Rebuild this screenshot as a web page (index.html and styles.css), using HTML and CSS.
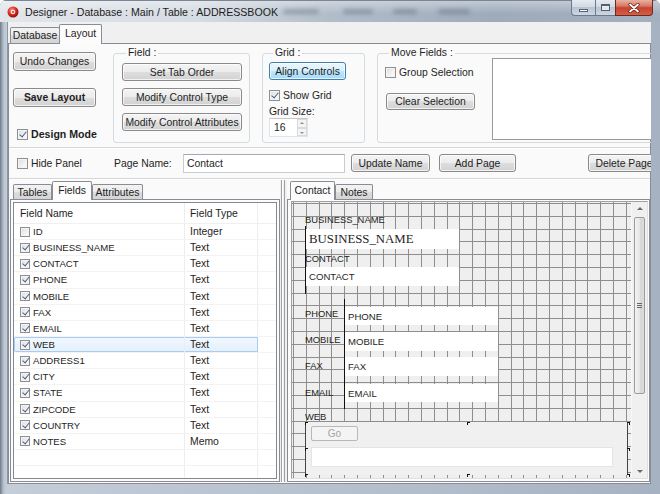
FILE: index.html
```html
<!DOCTYPE html>
<html>
<head>
<meta charset="utf-8">
<title>Designer</title>
<link rel="stylesheet" href="styles.css">
</head>
<body>
<div class="window">
  <div class="titlebar">
    <svg class="app-icon" width="12" height="12" viewBox="0 0 12 12">
      <defs>
        <radialGradient id="rg" cx="40%" cy="35%" r="65%">
          <stop offset="0" stop-color="#ff9a8a"/>
          <stop offset="0.6" stop-color="#d8261c"/>
          <stop offset="1" stop-color="#8e0f0a"/>
        </radialGradient>
      </defs>
      <circle cx="6" cy="6" r="5.5" fill="url(#rg)"/>
      <circle cx="6" cy="6" r="2.3" fill="#fff" opacity=".85"/>
      <circle cx="6" cy="6" r="1" fill="#d8261c"/>
    </svg>
    <span class="title">Designer - Database : Main / Table : ADDRESSBOOK</span>
    <div class="ghost"><i class="g1"></i><i class="g2"></i><i class="g3"></i><i class="g4"></i></div>
    <div class="caption">
      <span class="cap cap-min"><i></i></span>
      <span class="cap cap-max"><i></i></span>
      <span class="cap cap-close">
        <svg width="12" height="10" viewBox="0 0 12 10"><path d="M2 1.5 L10 8.5 M10 1.5 L2 8.5" stroke="#5a1a10" stroke-width="3.2" stroke-linecap="round"/><path d="M2 1.5 L10 8.5 M10 1.5 L2 8.5" stroke="#fff" stroke-width="1.8" stroke-linecap="round"/></svg>
      </span>
    </div>
  </div>

  <div class="client">
    <div class="main-tabs">
      <span class="tab tab-db">Database</span>
      <span class="tab tab-layout active">Layout</span>
    </div>

    <div class="tabpage">
      <div class="toolbar">
        <div class="col-main">
          <button class="btn b-undo">Undo Changes</button>
          <button class="btn b-save">Save Layout</button>
          <label class="chk chk-design"><span class="cb on"></span>Design Mode</label>
        </div>

        <fieldset class="group g-field">
          <legend>Field :</legend>
          <button class="btn b-field">Set Tab Order</button>
          <button class="btn b-field">Modify Control Type</button>
          <button class="btn b-field">Modify Control Attributes</button>
        </fieldset>

        <fieldset class="group g-grid">
          <legend>Grid :</legend>
          <button class="btn btn-hot b-align">Align Controls</button>
          <label class="chk chk-grid"><span class="cb on"></span>Show Grid</label>
          <div class="gs-label">Grid Size:</div>
          <div class="spin">
            <span class="spin-val">16</span>
            <span class="spin-btns"><i class="up"></i><i class="dn"></i></span>
          </div>
        </fieldset>

        <fieldset class="group g-move">
          <legend>Move Fields :</legend>
          <div class="move-col">
            <label class="chk chk-group"><span class="cb"></span>Group Selection</label>
            <button class="btn b-clear">Clear Selection</button>
          </div>
          <div class="move-list"></div>
        </fieldset>
      </div>

      <div class="pagebar">
        <label class="chk chk-hide"><span class="cb"></span>Hide Panel</label>
        <span class="pn-label">Page Name:</span>
        <span class="textin pn-input">Contact</span>
        <button class="btn b-upd">Update Name</button>
        <button class="btn b-add">Add Page</button>
        <button class="btn b-del">Delete Page</button>
      </div>

      <div class="work">
        <div class="leftpane">
          <div class="subtabs">
            <span class="stab st-tables">Tables</span>
            <span class="stab on st-fields">Fields</span>
            <span class="stab st-attr">Attributes</span>
          </div>
          <div class="subpage">
            <div class="listview">
              <div class="lv-head"><span class="c1">Field Name</span><span class="c2">Field Type</span><span class="c3"></span></div>
              <div class="lv-row"><span class="c1"><span class="cb"></span><span class="nm">ID</span></span><span class="c2">Integer</span><span class="c3"></span></div>
              <div class="lv-row"><span class="c1"><span class="cb on"></span><span class="nm">BUSINESS_NAME</span></span><span class="c2">Text</span><span class="c3"></span></div>
              <div class="lv-row"><span class="c1"><span class="cb on"></span><span class="nm">CONTACT</span></span><span class="c2">Text</span><span class="c3"></span></div>
              <div class="lv-row"><span class="c1"><span class="cb on"></span><span class="nm">PHONE</span></span><span class="c2">Text</span><span class="c3"></span></div>
              <div class="lv-row"><span class="c1"><span class="cb on"></span><span class="nm">MOBILE</span></span><span class="c2">Text</span><span class="c3"></span></div>
              <div class="lv-row"><span class="c1"><span class="cb on"></span><span class="nm">FAX</span></span><span class="c2">Text</span><span class="c3"></span></div>
              <div class="lv-row"><span class="c1"><span class="cb on"></span><span class="nm">EMAIL</span></span><span class="c2">Text</span><span class="c3"></span></div>
              <div class="lv-row sel"><span class="c1"><span class="cb on"></span><span class="nm">WEB</span></span><span class="c2">Text</span><span class="c3"></span></div>
              <div class="lv-row"><span class="c1"><span class="cb on"></span><span class="nm">ADDRESS1</span></span><span class="c2">Text</span><span class="c3"></span></div>
              <div class="lv-row"><span class="c1"><span class="cb on"></span><span class="nm">CITY</span></span><span class="c2">Text</span><span class="c3"></span></div>
              <div class="lv-row"><span class="c1"><span class="cb on"></span><span class="nm">STATE</span></span><span class="c2">Text</span><span class="c3"></span></div>
              <div class="lv-row"><span class="c1"><span class="cb on"></span><span class="nm">ZIPCODE</span></span><span class="c2">Text</span><span class="c3"></span></div>
              <div class="lv-row"><span class="c1"><span class="cb on"></span><span class="nm">COUNTRY</span></span><span class="c2">Text</span><span class="c3"></span></div>
              <div class="lv-row"><span class="c1"><span class="cb on"></span><span class="nm">NOTES</span></span><span class="c2">Memo</span><span class="c3"></span></div>
              <div class="lv-row empty"><span class="c1"></span><span class="c2"></span><span class="c3"></span></div>
              <div class="lv-row empty"><span class="c1"></span><span class="c2"></span><span class="c3"></span></div>
              <div class="lv-fill"><span class="c1"></span><span class="c2"></span><span class="c3"></span></div>
            </div>
          </div>
        </div>

        <div class="splitter"></div>

        <div class="rightpane">
          <div class="subtabs">
            <span class="stab on st-contact">Contact</span>
            <span class="stab st-notes">Notes</span>
          </div>
          <div class="subpage rp-page">
            <div class="canvas-wrap">
              <div class="canvas">
                <span class="lbl l-bn">BUSINESS_NAME</span>
                <span class="tb tb-serif t-bn">BUSINESS_NAME</span>
                <span class="lbl l-contact">CONTACT</span>
                <span class="tb t-contact">CONTACT</span>
                <span class="vline v1"></span>

                <span class="lbl l-phone">PHONE</span>
                <span class="tb t-phone">PHONE</span>
                <span class="lbl l-mobile">MOBILE</span>
                <span class="tb t-mobile">MOBILE</span>
                <span class="lbl l-fax">FAX</span>
                <span class="tb t-fax">FAX</span>
                <span class="lbl l-email">EMAIL</span>
                <span class="tb t-email">EMAIL</span>
                <span class="vline v2"></span>

                <span class="lbl l-web">WEB</span>
                <div class="webpanel">
                  <span class="go">Go</span>
                  <span class="web-input"></span>
                </div>
                <span class="hnd h1"></span><span class="hnd h2"></span><span class="hnd h3"></span>
                <span class="hnd h4"></span><span class="hnd h5"></span>
                <span class="hnd h6"></span><span class="hnd h7"></span><span class="hnd h8"></span>
                <span class="lbl l-addr">ADDRESS1</span>
              </div>
              <div class="vscroll">
                <span class="sb-arrow sb-up"></span>
                <span class="sb-track"><span class="sb-thumb"><i></i><i></i><i></i></span></span>
                <span class="sb-arrow sb-dn"></span>
              </div>
            </div>
          </div>
        </div>
      </div>
    </div>
  </div>
</div>
</body>
</html>
```

FILE: styles.css
```css
* { box-sizing: border-box; }
html, body { margin: 0; padding: 0; }
body {
  width: 660px; height: 494px; overflow: hidden; background: #ffffff;
  font-family: "Liberation Sans", Arial, sans-serif; font-size: 10.4px; color: #1e1e1e;
}

/* ---------- window frame ---------- */
.window {
  width: 660px; height: 494px; display: flex; flex-direction: column;
  background: linear-gradient(to right, #6f7984 0, #9aa5b2 2px, #bcc6d2 4px, #c4cdd8 7px, #b3bfcd 60%, #a6b2c1 100%);
  border-radius: 6px 6px 0 0; overflow: hidden;
}
.titlebar {
  height: 22px; flex: none; display: flex; align-items: center; padding: 0 7px 0 7px;
  background:
    linear-gradient(to bottom, rgba(255,255,255,.35), rgba(255,255,255,0) 60%),
    linear-gradient(to right, #e2e6eb 0%, #d6dce3 30%, #b2bdca 50%, #9eabbb 75%, #a5b0be 100%);
  border-top: 1px solid #7b8694;
}
.app-icon { flex: none; margin-right: 6px; }
.title { font-size: 10.6px; color: #1c1c1c; white-space: nowrap; }
.ghost { display: flex; align-items: center; margin-left: 5px; }
.ghost i { display: block; height: 5px; background: rgba(70, 82, 100, .35); filter: blur(2px); border-radius: 3px; }
.ghost .g1 { width: 36px; }
.ghost .g2 { width: 30px; margin-left: 24px; }
.ghost .g3 { width: 24px; margin-left: 20px; }
.ghost .g4 { width: 32px; margin-left: 21px; }
.caption { margin-left: auto; align-self: flex-start; display: flex; margin-top: -1px; }
.cap {
  height: 16px; display: flex; align-items: center; justify-content: center;
  border: 1px solid #6a7a8e; border-top: none;
  background: linear-gradient(#e6ebf1, #d2dae4 45%, #bac5d3 50%, #cdd6e1 100%);
}
.cap-min { width: 24px; border-radius: 0 0 0 4px; border-right: none; }
.cap-min i { width: 9px; height: 3px; background: #fff; border: 1px solid #55606e; margin-top: 5px; }
.cap-max { width: 20px; border-right: none; }
.cap-max i { width: 9px; height: 7px; border: 1px solid #55606e; border-top-width: 2px; background: rgba(255,255,255,.6); }
.cap-close {
  width: 38px; border-color: #6b2a20; border-radius: 0 0 4px 0;
  background: linear-gradient(#eab0a2, #d67a66 40%, #c7432e 52%, #d65e43 100%);
}

/* ---------- client ---------- */
.client {
  flex: 1; margin: 0 9px 10px 7px; background: #f0f0f0;
  display: flex; flex-direction: column; overflow: hidden;
  border-left: 1px solid #8a96a5;
}
.main-tabs { height: 21px; flex: none; display: flex; align-items: flex-end; padding-left: 2px; }
.tab {
  height: 16px; border: 1px solid #898c95; border-bottom: none; border-radius: 2px 2px 0 0;
  display: flex; align-items: center; justify-content: center;
  background: linear-gradient(#f3f3f3, #ebebeb 50%, #dddddd 50%, #d4d4d4);
  font-size: 10.4px;
}
.tab-db { width: 50px; }
.tab-layout { width: 43px; }
.tab.active {
  height: 20px; margin-bottom: -1px; margin-left: -1px; position: relative; z-index: 2;
  background: #fcfcfc; padding-bottom: 2px;
}

.tabpage {
  flex: 1; border: 1px solid #898c95; background: #fafafa;
  display: flex; flex-direction: column; min-height: 0;
}

/* ---------- common controls ---------- */
.btn {
  font-family: inherit; font-size: 10.4px; color: #1e1e1e; padding: 0; margin: 0;
  height: 18px; border: 1px solid #8a8a8a; border-radius: 3px;
  background: linear-gradient(#f4f4f4, #ececec 50%, #dedede 50%, #d2d2d2);
  box-shadow: inset 0 0 0 1px rgba(255,255,255,.7);
  display: flex; align-items: center; justify-content: center; white-space: nowrap;
}
.btn-hot {
  border-color: #3c7fb1;
  background: linear-gradient(#eaf6fd, #d9f0fc 50%, #bee6fd 50%, #a7d9f5);
}
.chk { display: flex; align-items: center; white-space: nowrap; }
.cb {
  width: 11px; height: 11px; flex: none; border: 1px solid #8e8f8f; position: relative;
  background: linear-gradient(135deg, #dcdcdc, #f6f6f6 70%);
  box-shadow: inset 0 0 0 1px #f4f4f4;
  margin-right: 3px;
}
.cb.on::after {
  content: ""; position: absolute; left: 3px; top: 0px; width: 3px; height: 6px;
  border: solid #4a5f8f; border-width: 0 1.5px 1.5px 0; transform: rotate(40deg);
}
.textin {
  display: flex; align-items: center; background: #fff; padding-left: 3px;
  border: 1px solid #c6ccd4; border-top-color: #a3a9b3;
}

/* ---------- toolbar ---------- */
.toolbar {
  height: 104px; flex: none; display: flex; align-items: flex-start;
  border-bottom: 1px solid #d6d6d6; box-shadow: 0 1px 0 #ffffff;
}
.col-main { flex: none; margin-left: 4px; padding-top: 8px; width: 83px; display: flex; flex-direction: column; }
.b-undo, .b-save { width: 83px; height: 19px; }
.b-save { margin-top: 17px; font-weight: bold; }
.chk-design { margin-top: 21px; margin-left: 4px; font-weight: bold; font-size: 10.6px; }

.group {
  flex: none; margin: 3px 0 0 0; padding: 0; border: 1px solid #d3dce2; border-radius: 3px;
  min-width: 0; height: 96px;
}
.group legend { font-size: 10.4px; line-height: 12px; padding: 0 2px; margin-left: 4px; }
.g-field { margin-left: 17px; width: 137px; padding: 4px 0 0 8px; }
.b-field { width: 120px; margin-bottom: 7px; }
.g-grid { margin-left: 12px; width: 103px; padding: 3px 0 0 6px; }
.b-align { width: 77px; }
.chk-grid { margin-top: 10px; }
.gs-label { margin-top: 5px; line-height: 12px; }
.spin {
  margin-top: 0px; width: 39px; height: 19px; display: flex; background: #fff;
  border: 1px solid #e1e5ea; border-top-color: #c4c8ce;
}
.spin-val { flex: 1; padding-left: 4px; display: flex; align-items: center; }
.spin-btns { width: 10px; display: flex; flex-direction: column; }
.spin-btns i {
  flex: 1; border: 1px solid #d8dadd; background: #f4f4f4; position: relative;
}
.spin-btns i::after {
  content: ""; position: absolute; left: 2px; border-left: 2px solid transparent; border-right: 2px solid transparent;
}
.spin-btns .up::after { top: 2px; border-bottom: 2px solid #8d8d8d; }
.spin-btns .dn::after { top: 3px; border-top: 2px solid #8d8d8d; }
.g-move { margin-left: 12px; width: 300px; display: flex; padding: 0 0 0 7px; }
.move-col { flex: none; width: 107px; padding-top: 8px; display: flex; flex-direction: column; }
.b-clear { width: 89px; height: 17px; margin-top: 15px; margin-left: 1px; }
.move-list {
  flex: none; width: 170px; height: 82px; margin-top: -1px; background: #fff; border: 1px solid #9a9a9a;
}

/* ---------- page bar ---------- */
.pagebar {
  height: 31px; flex: none; display: flex; align-items: center; padding-left: 8px;
  border-bottom: 1px solid #d6d6d6; box-shadow: 0 1px 0 #ffffff;
}
.pagebar > * { flex: none; }
.chk-hide { width: 97px; }
.pn-label { width: 69px; }
.pn-input { width: 162px; height: 19px; }
.b-upd { width: 79px; margin-left: 6px; }
.b-add { width: 77px; margin-left: 9px; }
.b-del { width: 72px; margin-left: 72px; }

/* ---------- work area ---------- */
.work { flex: 1; display: flex; min-height: 0; padding-bottom: 1px; }
.leftpane { width: 270px; flex: none; margin-left: 1px; display: flex; flex-direction: column; }
.subtabs { height: 20px; flex: none; display: flex; align-items: flex-end; padding-left: 3px; }
.stab {
  height: 15px; border: 1px solid #898c95; border-bottom: none; border-radius: 2px 2px 0 0;
  display: flex; align-items: center; justify-content: center;
  background: linear-gradient(#f3f3f3, #ebebeb 50%, #dddddd 50%, #d4d4d4);
}
.stab.on { height: 19px; margin-bottom: -1px; background: #fcfcfc; position: relative; z-index: 2; padding-bottom: 2px; }
.st-tables { width: 39px; }
.st-fields { width: 40px; }
.st-attr { width: 51px; }
.st-contact { width: 45px; }
.st-notes { width: 38px; }

.subpage { flex: 1; border: 1px solid #898c95; background: #fcfcfc; padding: 2px; min-height: 0; display: flex; }
.listview {
  flex: 1; background: #fff; border: 1px solid #828790; overflow: hidden;
  display: flex; flex-direction: column;
}
.lv-head { height: 21px; flex: none; display: flex; align-items: stretch; border-bottom: 1px solid #f0f0f0; }
.lv-head span { display: flex; align-items: center; padding-top: 1px; }
.c1 { width: 171px; flex: none; border-right: 1px solid #ededed; }
.c2 { width: 73px; flex: none; border-right: 1px solid #ededed; padding-left: 5px; }
.c3 { flex: 1; }
.lv-head .c1 { padding-left: 6px; }
.lv-row { height: 16.15px; flex: none; display: flex; align-items: stretch; border-bottom: 1px solid #f3f3f3; }
.lv-row span.c1, .lv-row span.c2 { display: flex; align-items: center; }
.lv-row .c1 { padding-left: 6px; }
.lv-row .cb { width: 10px; height: 10px; margin-right: 3px; }
.lv-row .cb.on::after { left: 2.5px; top: -0.5px; }
.nm { font-size: 9.6px; }
.lv-row.sel {
  background: linear-gradient(#f2f8fe, #e3effc); box-shadow: inset 0 0 0 1px #a8cdf3; border-radius: 2px;
}
.lv-row.sel .c3 { background: #fff; }
.lv-row.sel .c2 { border-right-color: #a8cdf3; }
.lv-fill { flex: 1; display: flex; }

.splitter {
  width: 7px; flex: none; margin-top: 1px;
  background: linear-gradient(to right, #f0f0f0 0, #f0f0f0 1px, #a0a0a0 1px, #a0a0a0 2px, #ffffff 2px, #ffffff 3px, #f0f0f0 3px, #f0f0f0 4px, #a0a0a0 4px, #a0a0a0 5px, #f0f0f0 5px);
}

.rightpane { flex: 1; display: flex; flex-direction: column; min-width: 0; }
.rp-page { padding: 1px 1px 2px 3px; }
.canvas-wrap {
  flex: 1; display: flex; border: 1px solid #a0a0a0; border-right-color: #e0e0e0; border-bottom-color: #e0e0e0;
  background: #f0f0f0; overflow: hidden; min-height: 0;
}
.canvas {
  flex: 1; position: relative; overflow: hidden;
  background-color: #efefef;
  background-image:
    repeating-linear-gradient(to right, #8e8e8e 0, #8e8e8e 1px, transparent 1px, transparent 12.8px),
    repeating-linear-gradient(to bottom, #8e8e8e 0, #8e8e8e 1px, transparent 1px, transparent 12.8px);
  background-position: 1px 1px;
}
.lbl { position: absolute; font-size: 9.4px; line-height: 12px; color: #1e1e1e; white-space: nowrap; }
.tb {
  position: absolute; background: #fff; font-size: 9.6px; padding-left: 3px;
  display: flex; align-items: center; white-space: nowrap; color: #1e1e1e;
}
.tb-serif { font-family: "Liberation Serif", "Times New Roman", serif; font-size: 12.8px; }
.vline { position: absolute; width: 1px; background: #111; }

.l-bn { left: 13px; top: 12px; }
.t-bn { left: 14px; top: 27px; width: 153px; height: 20px; }
.l-contact { left: 13px; top: 51px; }
.t-contact { left: 14px; top: 65px; width: 153px; height: 19px; }
.v1 { left: 13px; top: 24px; height: 68px; }
.l-phone { left: 13px; top: 106px; }
.t-phone { left: 53px; top: 105px; width: 153px; height: 18px; }
.l-mobile { left: 13px; top: 132px; }
.t-mobile { left: 53px; top: 130px; width: 153px; height: 19px; }
.l-fax { left: 13px; top: 158px; }
.t-fax { left: 53px; top: 155px; width: 153px; height: 19px; }
.l-email { left: 13px; top: 185px; }
.t-email { left: 53px; top: 182px; width: 153px; height: 18px; }
.v2 { left: 52px; top: 97px; height: 110px; }
.l-web { left: 13px; top: 209px; }
.webpanel {
  position: absolute; left: 13px; top: 220px; width: 323px; height: 53px;
  background: #f0f0f0; border-left: 1px solid #444; border-right: 1px solid #444;
}
.go {
  position: absolute; left: 5px; top: 4px; width: 47px; height: 15px;
  border: 1px solid #b5b9bd; border-radius: 2px; background: #f4f4f4; color: #a3a3a3;
  display: flex; align-items: center; justify-content: center; font-size: 10px;
}
.web-input { position: absolute; left: 5px; top: 25px; width: 302px; height: 20px; background: #fff; border: 1px solid #e4e4e4; }
.hnd { position: absolute; width: 3px; height: 3px; border-top: 1px solid #111; border-left: 1px solid #111; }
.h1 { left: 13px; top: 220px; }
.h2 { left: 175px; top: 220px; }
.h3 { left: 335px; top: 220px; border-left: none; border-right: 1px solid #111; }
.h4 { left: 13px; top: 246px; }
.h5 { left: 335px; top: 246px; border-left: none; border-right: 1px solid #111; }
.h6 { left: 13px; top: 272px; }
.h7 { left: 175px; top: 272px; }
.h8 { left: 335px; top: 272px; border-left: none; border-right: 1px solid #111; }
.l-addr { left: 13px; top: 274px; }

.vscroll { width: 16px; flex: none; display: flex; flex-direction: column; background: #f0f0f0; border-left: 1px solid #f7f7f7; }
.sb-arrow { height: 14px; flex: none; position: relative; }
.sb-arrow::after {
  content: ""; position: absolute; left: 5px; border-left: 3px solid transparent; border-right: 3px solid transparent;
}
.sb-up::after { top: 5px; border-bottom: 3px solid #6a6a6a; }
.sb-dn::after { top: 6px; border-top: 3px solid #6a6a6a; }
.sb-track { flex: 1; padding: 1px 2px; display: flex; flex-direction: column; }
.sb-thumb {
  height: 177px; border: 1px solid #9b9b9b; border-radius: 2px;
  background: linear-gradient(to right, #f2f2f2, #e6e6e6 50%, #d6d6d6 51%, #dcdcdc);
  display: flex; flex-direction: column; align-items: center; justify-content: center; gap: 1px;
}
.sb-thumb i { display: block; width: 5px; height: 1px; background: #666; }
```
